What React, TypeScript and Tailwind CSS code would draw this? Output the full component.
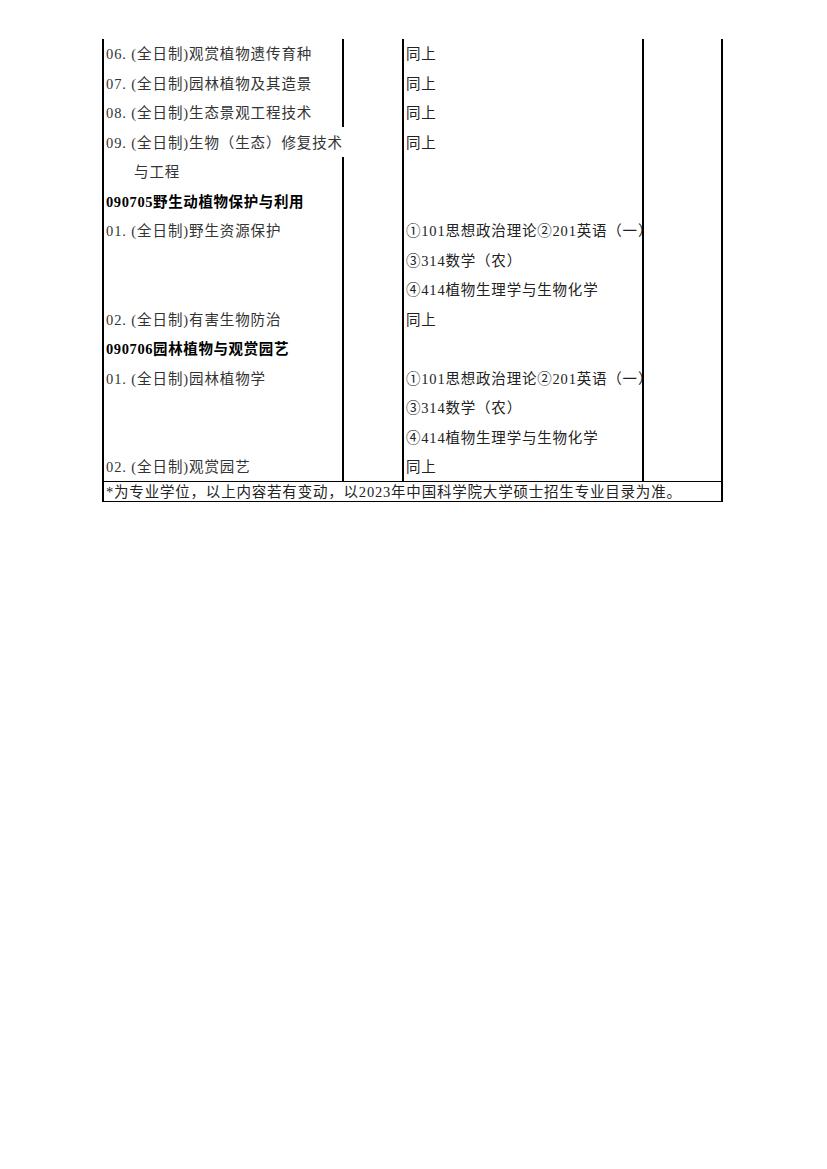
type Row = {
  c1?: string;
  c3?: string;
  bold?: boolean;
  indent?: boolean;
  overflow?: boolean;
};

const rows: Row[] = [
  { c1: '06. (全日制)观赏植物遗传育种', c3: '同上' },
  { c1: '07. (全日制)园林植物及其造景', c3: '同上' },
  { c1: '08. (全日制)生态景观工程技术', c3: '同上' },
  { c1: '09. (全日制)生物（生态）修复技术', c3: '同上', overflow: true },
  { c1: '与工程', indent: true },
  { c1: '090705野生动植物保护与利用', bold: true },
  { c1: '01. (全日制)野生资源保护', c3: '①101思想政治理论②201英语（一）' },
  { c3: '③314数学（农）' },
  { c3: '④414植物生理学与生物化学' },
  { c1: '02. (全日制)有害生物防治', c3: '同上' },
  { c1: '090706园林植物与观赏园艺', bold: true },
  { c1: '01. (全日制)园林植物学', c3: '①101思想政治理论②201英语（一）' },
  { c3: '③314数学（农）' },
  { c3: '④414植物生理学与生物化学' },
  { c1: '02. (全日制)观赏园艺', c3: '同上' },
];

const font = { fontFamily: '"Liberation Serif", "Noto Sans CJK SC", serif' };

export default function App() {
  return (
    <div className="min-h-[1169px] w-[827px] bg-white" style={font}>
      <div className="ml-[102px] w-[621px] pt-[39px] text-[14.5px] leading-none">
        {rows.map((r, i) => (
          <div key={i} className="flex h-[29.47px]">
            <div className="relative z-10 flex w-[240px] items-center border-l-2 border-black pl-[2px] pt-[2px]">
              {r.c1 && (
                <span
                  className={
                    r.bold
                      ? 'whitespace-nowrap font-bold tracking-[0.6px] text-black'
                      : `whitespace-nowrap tracking-[0.9px] text-[#333] ${r.indent ? 'pl-[28px]' : ''} ${r.overflow ? 'bg-white pr-[1px]' : ''}`
                  }
                >
                  {r.c1}
                </span>
              )}
            </div>
            <div className={`w-[60px] border-l-2 ${r.overflow ? 'border-transparent' : 'border-black'}`} />
            <div className="flex w-[240px] items-center overflow-hidden border-l-2 border-black pl-[2px] pt-[2px]">
              {r.c3 && <span className="whitespace-nowrap tracking-[0.8px] text-[#222]">{r.c3}</span>}
            </div>
            <div className="w-[81px] border-x-2 border-black" />
          </div>
        ))}
        <div className="flex h-[21px] items-center border-x-2 border-y-[1.5px] border-black pl-[2px] pt-[1px]">
          <span className="whitespace-nowrap tracking-[0.8px] text-[#222]">
            *为专业学位，以上内容若有变动，以2023年中国科学院大学硕士招生专业目录为准。
          </span>
        </div>
      </div>
    </div>
  );
}
